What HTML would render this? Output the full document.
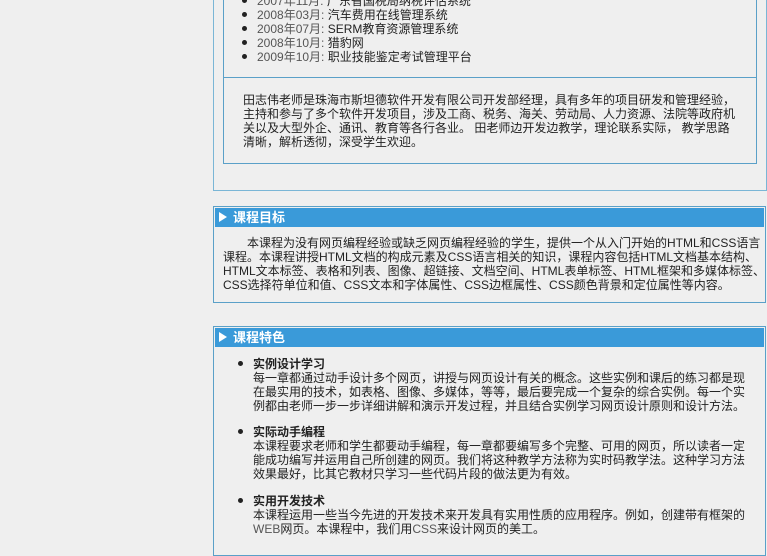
<!DOCTYPE html>
<html><head><meta charset="utf-8">
<style>
body{margin:0;width:767px;height:534px;overflow:hidden;background:#efefef;font-family:"Liberation Sans","Noto Sans CJK SC","WenQuanYi Zen Hei",sans-serif;font-size:12px;color:#222;position:relative}
.a{position:absolute}
.box{position:absolute;border:1px solid #5aa0c8;box-sizing:border-box}
.t{position:absolute;white-space:nowrap;line-height:14px}
.hdr{position:absolute;left:215px;width:549px;height:19px;background:#3a9ad9;color:#fff;font-weight:bold;font-size:13px;line-height:19px}
.tri{position:absolute;left:4px;top:4px;width:0;height:0;border-left:8px solid #fff;border-top:5px solid transparent;border-bottom:5px solid transparent}
.dot{display:inline-block;width:5px;height:5px;border-radius:50%;background:#222;margin-right:10px;vertical-align:2px}
.g{color:#555}
</style></head><body>
<div class="box" style="left:213px;top:-10px;width:554px;height:201px;border-color:#7ab6d6"></div>
<div class="box" style="left:223px;top:-10px;width:534px;height:174px"></div>
<div class="a" style="left:224px;top:77px;width:532px;height:1px;background:#5aa0c8"></div>
<div class="t" style="left:242px;top:-6px">
<span class="dot"></span><span class="g">2007年11月:</span> 广东省国税局纳税评估系统<br>
<span class="dot"></span><span class="g">2008年03月:</span> 汽车费用在线管理系统<br>
<span class="dot"></span><span class="g">2008年07月:</span> SERM教育资源管理系统<br>
<span class="dot"></span><span class="g">2008年10月:</span> 猎豹网<br>
<span class="dot"></span><span class="g">2009年10月:</span> 职业技能鉴定考试管理平台</div>
<div class="t" style="left:243px;top:93px">田志伟老师是珠海市斯坦德软件开发有限公司开发部经理，具有多年的项目研发和管理经验，<br>主持和参与了多个软件开发项目，涉及工商、税务、海关、劳动局、人力资源、法院等政府机<br>关以及大型外企、通讯、教育等各行各业。 田老师边开发边教学，理论联系实际， 教学思路<br>清晰，解析透彻，深受学生欢迎。</div>

<div class="box" style="left:213px;top:206px;width:553px;height:97px;border-color:#5aa0c8"></div>
<div class="hdr" style="top:208px"><div class="tri"></div><span style="position:absolute;left:18px">课程目标</span></div>
<div class="t" style="left:223px;top:236px">　　本课程为没有网页编程经验或缺乏网页编程经验的学生，提供一个从入门开始的HTML和CSS语言<br>课程。本课程讲授HTML文档的构成元素及CSS语言相关的知识，课程内容包括HTML文档基本结构、<br>HTML文本标签、表格和列表、图像、超链接、文档空间、HTML表单标签、HTML框架和多媒体标签、<br>CSS选择符单位和值、CSS文本和字体属性、CSS边框属性、CSS颜色背景和定位属性等内容。</div>

<div class="box" style="left:213px;top:326px;width:553px;height:230px;border-color:#5aa0c8"></div>
<div class="hdr" style="top:328px"><div class="tri"></div><span style="position:absolute;left:18px">课程特色</span></div>
<div class="t" style="left:238px;top:357px"><span class="dot"></span><b>实例设计学习</b></div>
<div class="t" style="left:253px;top:371px">每一章都通过动手设计多个网页，讲授与网页设计有关的概念。这些实例和课后的练习都是现<br>在最实用的技术，如表格、图像、多媒体，等等，最后要完成一个复杂的综合实例。每一个实<br>例都由老师一步一步详细讲解和演示开发过程，并且结合实例学习网页设计原则和设计方法。</div>
<div class="t" style="left:238px;top:425px"><span class="dot"></span><b>实际动手编程</b></div>
<div class="t" style="left:253px;top:439px">本课程要求老师和学生都要动手编程，每一章都要编写多个完整、可用的网页，所以读者一定<br>能成功编写并运用自己所创建的网页。我们将这种教学方法称为实时码教学法。这种学习方法<br>效果最好，比其它教材只学习一些代码片段的做法更为有效。</div>
<div class="t" style="left:238px;top:494px"><span class="dot"></span><b>实用开发技术</b></div>
<div class="t" style="left:253px;top:508px">本课程运用一些当今先进的开发技术来开发具有实用性质的应用程序。例如，创建带有框架的<br><span class="g">WEB</span>网页。本课程中，我们用<span class="g">CSS</span>来设计网页的美工。</div>
</body></html>
